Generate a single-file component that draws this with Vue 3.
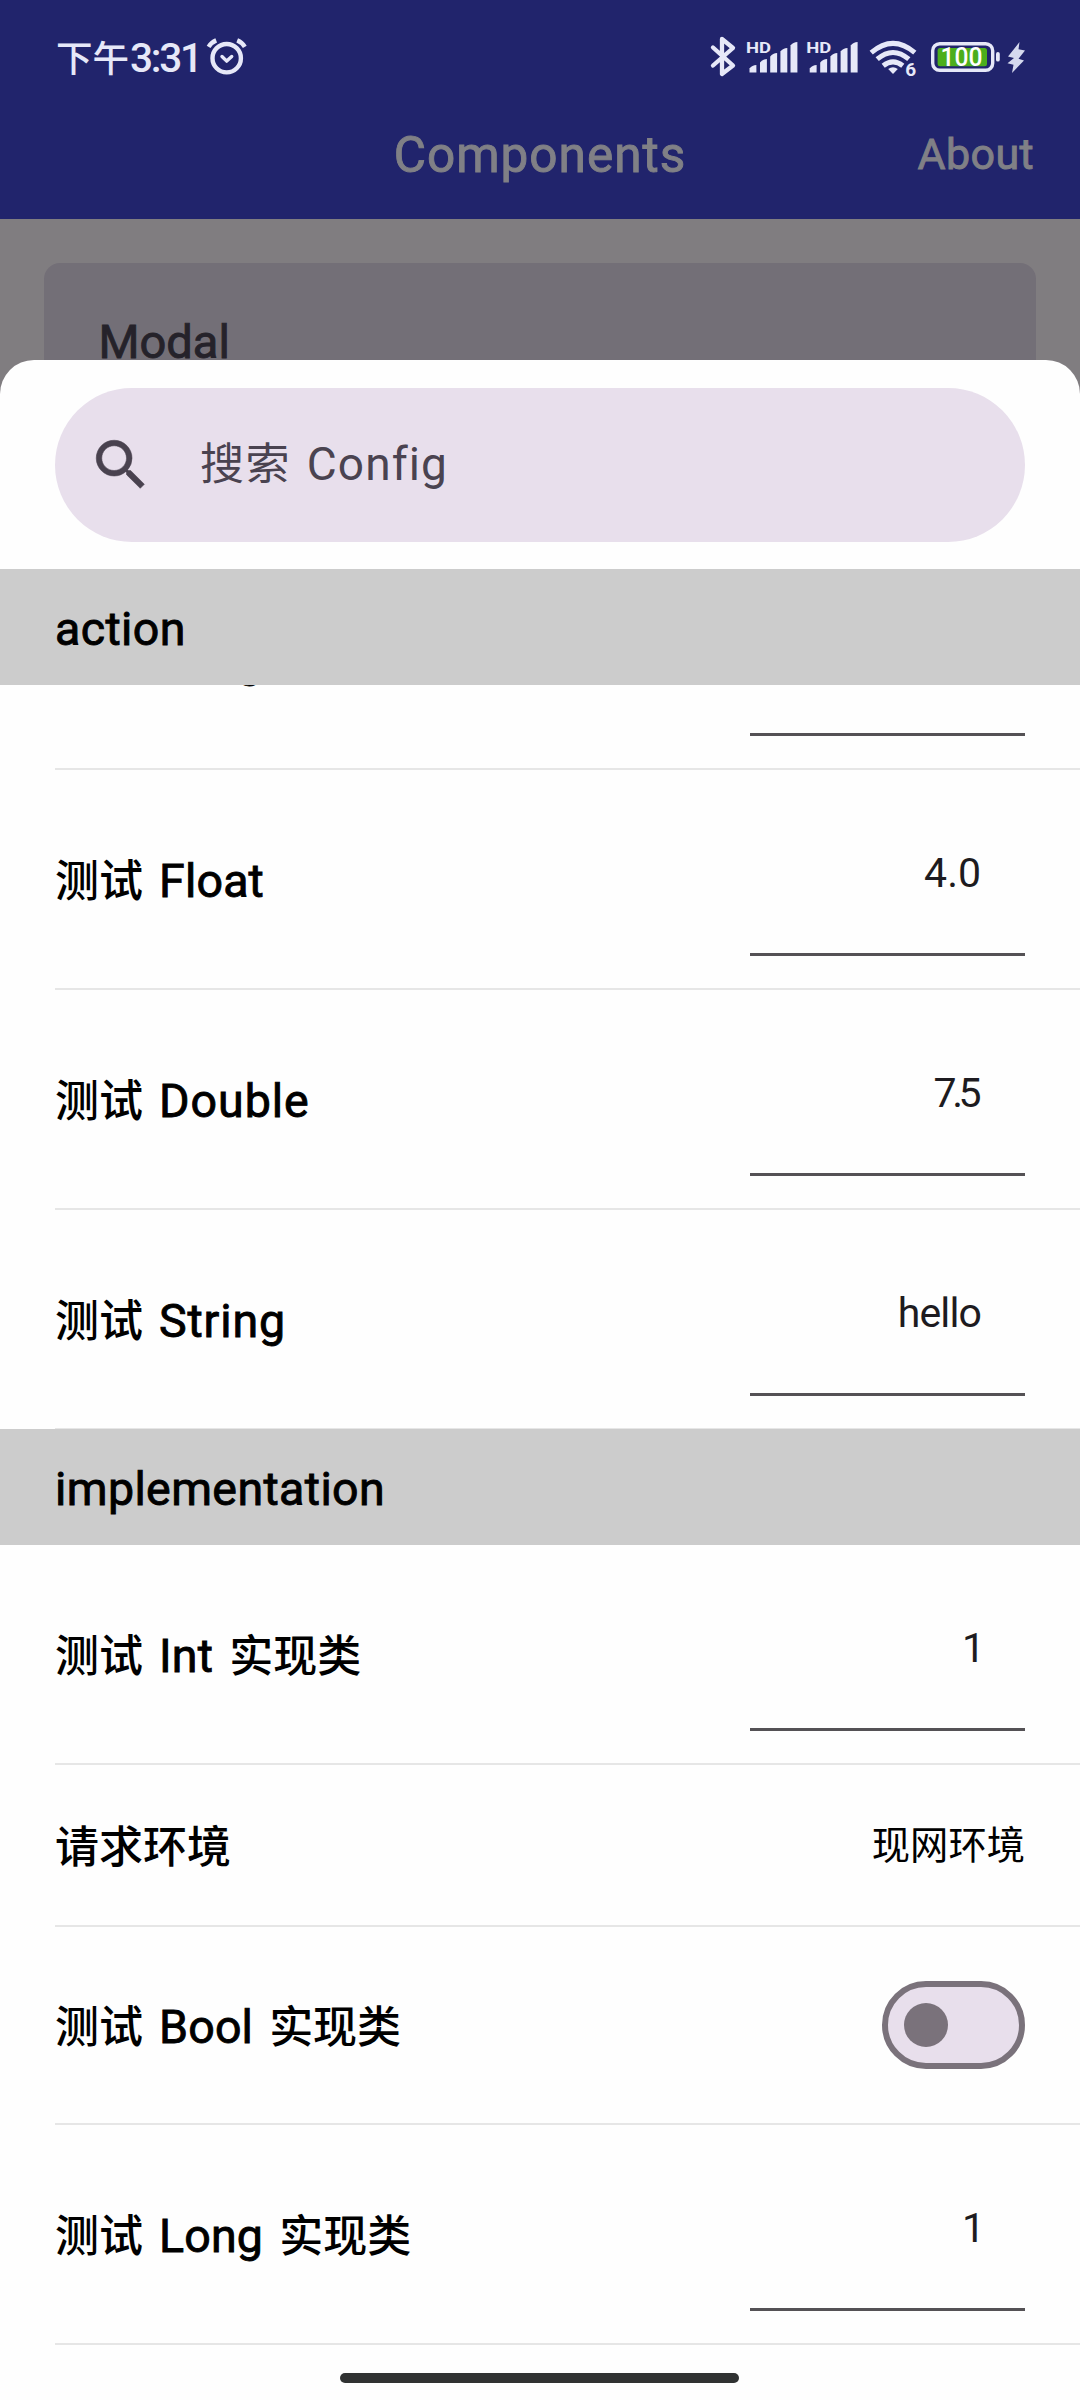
<script setup>
const groups = [
  {
    name: 'action',
    rows: [
      { parts: ['测试', 'Long'], value: '3', kind: 'field' },
      { parts: ['测试', 'Float'], value: '4.0', kind: 'field' },
      { parts: ['测试', 'Double'], value: '7.5', kind: 'field', fit: 'tight' },
      { parts: ['测试', 'String'], value: 'hello', kind: 'field', fit: 'word' },
    ],
  },
  {
    name: 'implementation',
    rows: [
      { parts: ['测试', 'Int', '实现类'], value: '1', kind: 'field', fit: 'one' },
      { parts: ['请求环境'], value: '现网环境', kind: 'choice' },
      { parts: ['测试', 'Bool', '实现类'], kind: 'switch' },
      { parts: ['测试', 'Long', '实现类'], value: '1', kind: 'field', fit: 'one' },
    ],
  },
]
const isLatin = (s) => /^[A-Za-z]/.test(s)
const bars = [
  [749.5, 65], [760, 59], [770.2, 53], [780.4, 48], [790.5, 42],
]
</script>

<template>
  <div class="screen">
    <header class="top">
      <div class="status">
        <span class="clock">下午<span class="time">3:31</span></span>
        <svg class="alarm" viewBox="206 36 42 42" width="42" height="42" fill="none" stroke="#e6e8f8" stroke-width="4.4" stroke-linecap="round" stroke-linejoin="round">
          <circle cx="226.7" cy="58.2" r="14.2" />
          <path d="M222 56.5l4.7 4.6 5-4.6" stroke-width="3.4" />
          <path d="M208.6 46.8q2.700-4.400 7.600-6.400M244.800 46.800q-2.700-4.400-7.600-6.400" stroke-linecap="butt" />
        </svg>
        <svg class="tray" viewBox="700 30 340 54" width="340" height="54">
          <path d="M713 47.500L733 65.500 722 74V39L733 48 713 65.500" fill="none" stroke="#e6e8f8" stroke-width="4.3" stroke-linejoin="round" stroke-linecap="round" />
          <g v-for="dx in [0, 60.2]" :key="dx" :transform="`translate(${dx} 0)`" fill="#e6e8f8">
            <text x="746" y="52.900" class="hd" textLength="25" lengthAdjust="spacingAndGlyphs">HD</text>
            <path v-for="b in bars" :key="b[0]" :d="`M${b[0]} 72.6V${b[1] + 3.6}Q${b[0] + 2.6} ${b[1]} ${b[0] + 6.9} ${b[1]}V72.6Z`" />
          </g>
          <g fill="none" stroke="#e6e8f8" stroke-width="5">
            <path d="M871.200 52.600Q893 34 914.800 52.600" />
            <path d="M877.200 59.200Q893 45.800 908.800 59.200" />
            <path d="M883.200 65.800Q893 58 902.800 65.800" />
          </g>
          <path d="M893 74l-4.800-4.900q4.800-3.800 9.600 0Z" fill="#e6e8f8" />
          <text x="905.200" y="75.600" class="six">6</text>
          <rect x="932.700" y="43.700" width="60" height="26.600" rx="7" fill="none" stroke="#e6e8f8" stroke-width="3.4" />
          <rect x="937.600" y="48" width="49.400" height="18.200" rx="2.500" fill="#4cae1c" />
          <rect x="996" y="52" width="3.800" height="9.600" rx="1.900" fill="#e6e8f8" />
          <text x="940.500" y="66.200" class="pct" textLength="42" lengthAdjust="spacingAndGlyphs">100</text>
          <path d="M1019.500 42L1008 56.500 1014 58 1007.500 63.200 1013.500 64.700 1012 73 1024 60.500 1018.500 58.800 1025 50.500 1018.500 49.300Z" fill="#d5d9ee" />
        </svg>
      </div>
      <div class="appbar">
        <span class="title">Components</span>
        <span class="about">About</span>
      </div>
    </header>

    <div class="card"><span>Modal</span></div>

    <section class="sheet">
      <div class="search">
        <svg viewBox="0 0 24 24" width="66" height="66" fill="#49424f" stroke="#49424f" stroke-width=".2">
          <path d="M15.500 14h-.79l-.28-.27A6.471 6.471 0 0 0 16 9.500 6.500 6.500 0 1 0 9.500 16c1.610 0 3.090-.59 4.230-1.570l.27.28v.79l5 4.990L20.490 19l-4.990-5zm-6 0C7.010 14 5 11.990 5 9.500S7.010 5 9.500 5 14 7.010 14 9.500 11.990 14 9.500 14z" />
        </svg>
        <span class="hint">搜索<span class="hint-en">Config</span></span>
      </div>
      <div class="list">
        <div v-for="g in groups" :key="g.name" class="group">
          <div class="head">{{ g.name }}</div>
          <div class="rows">
            <div v-for="r in g.rows" :key="r.parts.join()" class="row" :class="r.kind">
              <span class="label"><span v-for="p in r.parts" :key="p" :class="isLatin(p) ? ['en', p.toLowerCase()] : null">{{ p }}</span></span>
              <div v-if="r.kind === 'field'" class="input"><span :class="r.fit">{{ r.value }}</span></div>
              <span v-else-if="r.kind === 'choice'" class="pick">{{ r.value }}</span>
              <div v-else class="toggle"><i></i></div>
            </div>
          </div>
        </div>
      </div>
    </section>
    <div class="home"></div>
  </div>
</template>

<style>
body { margin: 0; }
</style>

<style scoped>
.screen {
  position: relative;
  width: 1080px;
  height: 2400px;
  overflow: hidden;
  display: flex;
  flex-direction: column;
  background: #807d80;
  font-family: "Noto Sans CJK SC", sans-serif;
}
.time, .hd, .six, .pct, .title, .about, .card, .hint-en, .head, .en, .input {
  font-family: Roboto, "Noto Sans CJK SC", sans-serif;
}
.title, .about, .card, .head, .en { font-weight: 400; -webkit-text-stroke: .9px currentColor; }
.top { height: 219px; background: #21246c; flex: none; }
.status { display: flex; height: 84px; box-sizing: border-box; padding: 30px 40px 0 56px; }
.clock { width: 150px; font-size: 36.500px; font-weight: 500; color: #e6e8f8; line-height: 54px; white-space: nowrap; }
.time { font-size: 40.500px; line-height: 1; margin-left: 1px; letter-spacing: -2.2px; }
.alarm { margin-top: 6px; }
.tray { margin-left: auto; }
.hd { font-size: 15.500px; font-weight: 700; }
.six { font-size: 19px; font-weight: 700; fill: #e6e8f8; }
.pct { font-size: 25px; font-weight: 500; fill: #fff; }
.appbar { position: relative; height: 135px; display: flex; justify-content: center; color: #808086; }
.title { font-size: 49.500px; letter-spacing: 1px; line-height: 142px; }
.about { position: absolute; right: 46px; top: 0; font-size: 43px; letter-spacing: .4px; line-height: 140px; }
.card {
  flex: none;
  margin: 44px 44px -33px;
  height: 130px;
  box-sizing: border-box;
  padding: 42px 0 0 54.500px;
  border-radius: 16px 16px 0 0;
  background: #736f77;
  color: #25222a;
  font-size: 47px;
  line-height: 73.500px;
}
.sheet {
  position: relative;
  flex: none;
  height: 2040px;
  box-sizing: border-box;
  background: #fefefe;
  border-radius: 34px 34px 0 0;
  padding-top: 28px;
}
.search {
  margin: 0 55px 27px;
  height: 154px;
  border-radius: 77px;
  background: #e8dfec;
  display: flex;
  align-items: center;
  padding-left: 33px;
  box-sizing: border-box;
}
.hint { margin-left: 46px; padding-bottom: 8px; font-size: 44px; letter-spacing: 1.4px; line-height: 66px; color: #4a4350; }
.hint-en { margin-left: 16px; font-size: 46px; line-height: 1; letter-spacing: 1.1px; }
.head {
  position: relative;
  z-index: 1;
  height: 115.500px;
  box-sizing: border-box;
  background: #ccc;
  padding-left: 55px;
  line-height: 120px;
  font-size: 46.500px;
  letter-spacing: .4px;
  color: #000;
}
.group:first-child .rows { height: 744.500px; display: flex; flex-direction: column; justify-content: flex-end; }
.row {
  flex: none;
  position: relative;
  height: 220px;
  box-sizing: border-box;
  margin-left: 55px;
  padding-right: 55px;
  border-bottom: 2px solid #e6e6e6;
  display: flex;
  justify-content: space-between;
  align-items: center;
}
.group:first-child .row { top: 1px; }
.row.choice { height: 162px; }
.row.switch { height: 198px; }
.label { font-size: 44px; font-weight: 500; line-height: 64px; padding-bottom: 2px; color: #000; white-space: nowrap; }
.en { margin: 0 16px; font-size: 46.500px; line-height: 1; letter-spacing: .2px; }
.en.double { letter-spacing: 1px; }
.en.string { letter-spacing: .9px; }
.input {
  align-self: flex-start;
  width: 275px;
  height: 186px;
  box-sizing: border-box;
  border-bottom: 3px solid #545155;
  text-align: right;
  padding-right: 44px;
  font-size: 41px;
  line-height: 206px;
  color: #1d1b20;
}
.word { letter-spacing: -.9px; }
.tight { letter-spacing: -4.5px; margin-right: 4px; }
.one { margin-right: -4px; }
.pick { font-size: 38.300px; line-height: 56px; padding-bottom: 4px; color: #000; }
.toggle {
  width: 143px;
  height: 88px;
  box-sizing: border-box;
  border: 6px solid #7a727b;
  border-radius: 44px;
  background: #e8dfec;
  display: flex;
  align-items: center;
  padding-left: 16px;
}
.toggle i { width: 44px; height: 44px; border-radius: 50%; background: #7a727b; }
.home {
  position: absolute;
  left: 340px;
  bottom: 17px;
  width: 399px;
  height: 10px;
  border-radius: 5px;
  background: #303232;
}
</style>
